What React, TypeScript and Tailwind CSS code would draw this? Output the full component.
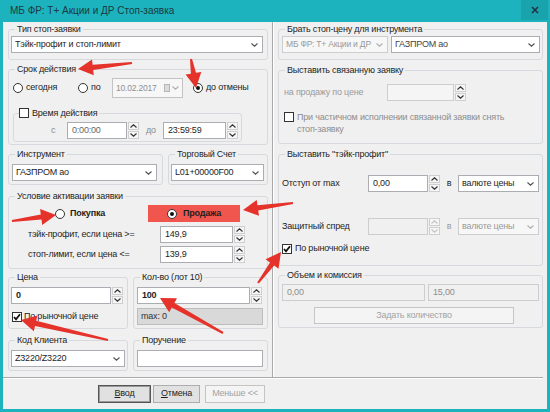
import React from "react";

type P = { className?: string; children?: React.ReactNode };

function Group({ label, className = "", children }: P & { label: React.ReactNode }) {
  return (
    <fieldset className={`border border-[#d6dade] rounded-[3px] px-[2px] min-w-0 ${className}`}>
      <legend className="ml-[4px] px-[2px] h-[12px] leading-[12px] text-[#1e1e1e]">{label}</legend>
      {children}
    </fieldset>
  );
}

function Chev({ up = false, color = "#444" }: { up?: boolean; color?: string }) {
  return (
    <svg width="7" height="4" viewBox="0 0 7 4" className="shrink-0">
      <polyline
        points={up ? "0.5,3.5 3.5,0.8 6.5,3.5" : "0.5,0.5 3.5,3.2 6.5,0.5"}
        fill="none"
        stroke={color}
        strokeWidth="1.2"
      />
    </svg>
  );
}

function Spin({ disabled = false }: { disabled?: boolean }) {
  const c = disabled ? "#c4c4c4" : "#333";
  return (
    <div className="flex flex-col w-[11px] h-[17px] ml-[1px] shrink-0">
      <div className="h-[8px] border border-[#cfcfcf] bg-[#f6f6f6] flex items-center justify-center">
        <Chev up color={c} />
      </div>
      <div className="h-[8px] mt-[1px] border border-[#cfcfcf] bg-[#f6f6f6] flex items-center justify-center">
        <Chev color={c} />
      </div>
    </div>
  );
}

function Select({ value, className = "", disabled = false }: { value: string; className?: string; disabled?: boolean }) {
  return (
    <div
      className={`h-[17px] border ${disabled ? "border-[#cdcdcd] bg-[#f7f7f7] text-[#9a9a9a]" : "border-[#abadb3] bg-white text-[#1e1e1e]"} flex items-center pl-[3px] pr-[4px] shrink-0 ${className}`}
    >
      <span className="flex-1 whitespace-nowrap overflow-hidden">{value}</span>
      <Chev color={disabled ? "#b0b0b0" : "#555"} />
    </div>
  );
}

function Input({ value = "", className = "", disabled = false, bold = false, muted = false }: { value?: string; className?: string; disabled?: boolean; bold?: boolean; muted?: boolean }) {
  return (
    <div
      className={`h-[17px] border flex items-center pl-[4px] shrink-0 ${disabled ? "border-[#cdcdcd] bg-[#f0f0f0] text-[#8d8d8d]" : "border-[#abadb3] bg-white"} ${muted ? "text-[#666]" : disabled ? "" : "text-[#1e1e1e]"} ${bold ? "font-bold" : ""} ${className}`}
    >
      {value}
    </div>
  );
}

function Radio({ checked = false }: { checked?: boolean }) {
  return (
    <div className="w-[10px] h-[10px] rounded-full border border-[#333] bg-white flex items-center justify-center shrink-0">
      {checked && <div className="w-[4px] h-[4px] rounded-full bg-[#111]" />}
    </div>
  );
}

function Check({ checked = false }: { checked?: boolean }) {
  return (
    <div className="w-[10px] h-[10px] border border-[#333] bg-white flex items-center justify-center shrink-0">
      {checked && (
        <svg width="8" height="8" viewBox="0 0 8 8">
          <polyline points="1,4 3,6.3 7,1.2" fill="none" stroke="#111" strokeWidth="1.8" />
        </svg>
      )}
    </div>
  );
}

function Arrow({ x1, y1, x2, y2 }: { x1: number; y1: number; x2: number; y2: number }) {
  const dx = x2 - x1;
  const dy = y2 - y1;
  const len = Math.sqrt(dx * dx + dy * dy);
  const ux = dx / len;
  const uy = dy / len;
  const nx = -uy;
  const ny = ux;
  const hl = 15;
  const hw = 8;
  const bx = x2 - ux * hl;
  const by = y2 - uy * hl;
  const tw = 1;
  const sw = 2.6;
  const pts = [
    [x1 + nx * tw, y1 + ny * tw],
    [bx + nx * sw, by + ny * sw],
    [bx + nx * hw, by + ny * hw],
    [x2, y2],
    [bx - nx * hw, by - ny * hw],
    [bx - nx * sw, by - ny * sw],
    [x1 - nx * tw, y1 - ny * tw],
  ]
    .map((p) => `${p[0].toFixed(1)},${p[1].toFixed(1)}`)
    .join(" ");
  return <polygon points={pts} fill="#e5322a" />;
}

function Btn({ children, className = "" }: P) {
  return (
    <div className={`h-[18px] flex items-center justify-center border ${className}`}>{children}</div>
  );
}

export default function App() {
  return (
    <div className="relative w-[550px] h-[412px] bg-[#1cb3be] flex flex-col font-['Liberation_Sans',Arial,sans-serif] text-[9px] tracking-[-0.2px] text-[#1e1e1e] overflow-hidden">
      {/* title bar */}
      <div className="h-[22px] flex shrink-0">
        <div className="flex-1 pl-[10px] pt-[5px] text-[10px] tracking-normal text-[#1d3a3e] leading-[12px]">МБ ФР: Т+ Акции и ДР Стоп-заявка</div>
        <div className="w-[27px] h-[20px] mr-[2px] bg-[#19a3ad] flex items-center justify-center">
          <svg width="8" height="8" viewBox="0 0 8 8">
            <path d="M1 1 L7 7 M7 1 L1 7" stroke="#234" strokeWidth="1.6" />
          </svg>
        </div>
      </div>

      {/* body */}
      <div className="mx-[3px] mb-[3px] flex-1 bg-[#f0f0f0] flex flex-col">
        <div className="h-[355px] flex pl-[5px] shrink-0">
          {/* left column */}
          <div className="w-[260px] flex flex-col pt-[1px]">
            <Group label="Тип стоп-заявки" className="pt-[1px] pb-[6px]">
              <Select value="Тэйк-профит и стоп-лимит" className="w-[252px]" />
            </Group>

            <Group label="Срок действия" className="mt-[3px] pb-[2px]">
              <div className="mt-[3px] h-[20px] flex items-center">
                <div className="ml-[2px] flex items-center gap-[3px] w-[65px]">
                  <Radio />
                  <span>сегодня</span>
                </div>
                <div className="flex items-center gap-[3px] w-[34px]">
                  <Radio />
                  <span>по</span>
                </div>
                <div className="w-[71px] h-[20px] border border-[#c3c3c3] bg-[#f7f7f7] flex items-center pl-[3px] pr-[3px] text-[#909090]">
                  <span className="flex-1 whitespace-nowrap text-[8.5px]">10.02.2017</span>
                  <div className="w-[6px] h-[8px] border border-[#b5b5b5] bg-[#dcdcdc] mr-[2px] shrink-0" />
                  <Chev color="#b0b0b0" />
                </div>
                <div className="ml-[10px] flex items-center gap-[3px]">
                  <Radio checked />
                  <span>до отмены</span>
                </div>
              </div>

              <Group
                label={
                  <span className="flex items-center gap-[3px] -ml-[3px]">
                    <Check />
                    <span>Время действия</span>
                  </span>
                }
                className="ml-[2px] w-[229px] mt-[9px] pb-[2px]"
              >
                <div className="mt-[3px] flex items-center">
                  <div className="w-[35px]" />
                  <span className="w-[16px] text-[#8a8a8a]">с</span>
                  <Input value="0:00:00" muted className="w-[60px]" />
                  <Spin />
                  <span className="w-[24px] text-center text-[#8a8a8a]">до</span>
                  <Input value="23:59:59" className="w-[63px]" />
                  <Spin />
                </div>
              </Group>
            </Group>

            <div className="mt-[3px] flex gap-[5px]">
              <Group label="Инструмент" className="w-[155px] pt-[4px] pb-[3px]">
                <Select value="ГАЗПРОМ ао" className="w-[145px] ml-[1px]" />
              </Group>
              <Group label="Торговый Счет" className="w-[100px] pt-[4px] pb-[3px]">
                <Select value="L01+00000F00" className="w-[93px]" />
              </Group>
            </div>

            <Group label="Условие активации заявки" className="mt-[5px] pb-[5px]">
              <div className="mt-[3px] h-[17px] flex items-center">
                <div className="w-[137px] pl-[44px] flex items-center gap-[5px] font-bold">
                  <Radio />
                  <span>Покупка</span>
                </div>
                <div className="w-[92px] h-[17px] bg-[#f0564d] flex items-center justify-center gap-[6px] font-bold">
                  <Radio checked />
                  <span>Продажа</span>
                </div>
              </div>
              <div className="mt-[4px] flex items-center">
                <span className="w-[149px] pl-[17px]">тэйк-профит, если цена &gt;=</span>
                <Input value="149,9" className="w-[73px]" />
                <Spin />
              </div>
              <div className="mt-[3px] flex items-center">
                <span className="w-[149px] pl-[17px]">стоп-лимит, если цена &lt;=</span>
                <Input value="139,9" className="w-[73px]" />
                <Spin />
              </div>
            </Group>

            <div className="mt-[2px] flex gap-[5px]">
              <Group label="Цена" className="w-[120px] pb-[6px]">
                <div className="mt-[4px] flex items-center">
                  <Input value="0" bold className="w-[100px]" />
                  <Spin />
                </div>
                <div className="mt-[8px] h-[10px] ml-[1px] flex items-center gap-[2px]">
                  <Check checked />
                  <span>По рыночной цене</span>
                </div>
              </Group>
              <Group label="Кол-во (лот 10)" className="w-[135px] pb-[3px]">
                <div className="mt-[4px] ml-[1px] flex items-center">
                  <Input value="100" bold className="w-[113px]" />
                  <Spin />
                </div>
                <div className="mt-[4px] ml-[1px] w-[126px] h-[17px] bg-[#d9d9d9] border border-[#bdbdbd] flex items-center pl-[3px] text-[#333]">
                  max: 0
                </div>
              </Group>
            </div>

            <div className="mt-[5px] flex gap-[5px]">
              <Group label="Код Клиента" className="w-[120px] pb-[3px]">
                <Select value="Z3220/Z3220" className="mt-[4px] w-[114px]" />
              </Group>
              <Group label="Поручение" className="w-[135px] pb-[3px]">
                <Input className="mt-[4px] ml-[1px] w-[126px]" />
              </Group>
            </div>
          </div>

          {/* separator */}
          <div className="ml-[4px] w-[1px] bg-[#a9a9a9]" />
          <div className="w-[1px] bg-white" />

          {/* right column */}
          <div className="ml-[4px] w-[265px] flex flex-col pt-[1px]">
            <Group label="Брать стоп-цену для инструмента" className="pt-[1px] pb-[6px]">
              <div className="ml-[1px] flex gap-[3px]">
                <Select value="МБ ФР: Т+ Акции и ДР" disabled className="w-[106px] pr-[3px] text-[8.5px]" />
                <Select value="ГАЗПРОМ ао" className="w-[149px] text-[#444]" />
              </div>
            </Group>

            <Group label="Выставить связанную заявку" className="mt-[4px] pb-[8px]">
              <div className="mt-[8px] flex items-center">
                <span className="w-[106px] pl-[3px] text-[#9a9a9a]">на продажу по цене</span>
                <Input disabled className="w-[67px] bg-[#f5f5f5]" />
                <Spin />
              </div>
              <div className="mt-[10px] pl-[3px] flex items-start gap-[3px]">
                <div className="mt-[1px]">
                  <Check />
                </div>
                <span className="leading-[12px] text-[#8d8d8d]">
                  При частичном исполнении связанной заявки снять
                  <br />
                  стоп-заявку
                </span>
              </div>
            </Group>

            <Group label={'Выставить "тэйк-профит"'} className="mt-[4px] pb-[11px]">
              <div className="mt-[15px] flex items-center">
                <span className="w-[87px] pl-[1px]">Отступ от max</span>
                <Input value="0,00" className="w-[60px]" />
                <Spin />
                <span className="w-[18px] text-center">в</span>
                <Select value="валюте цены" className="w-[81px]" />
              </div>
              <div className="mt-[26px] flex items-center">
                <span className="w-[87px] pl-[1px]">Защитный спред</span>
                <Input disabled className="w-[60px]" />
                <Spin disabled />
                <span className="w-[18px] text-center text-[#9a9a9a]">в</span>
                <Select value="валюте цены" disabled className="w-[81px]" />
              </div>
              <div className="mt-[9px] h-[10px] ml-[1px] flex items-center gap-[3px]">
                <Check checked />
                <span>По рыночной цене</span>
              </div>
            </Group>

            <Group label="Объем и комиссия" className="mt-[3px] pb-[3px]">
              <div className="mt-[3px] ml-[1px] flex gap-[3px]">
                <Input value="0,00" disabled className="w-[143px]" />
                <Input value="15,00" disabled className="w-[111px]" />
              </div>
              <div className="mt-[6px] ml-[33px] w-[200px] h-[17px] border border-[#c6c6c6] bg-[#f4f4f4] flex items-center justify-center text-[#a3a3a3]">
                Задать количество
              </div>
            </Group>
          </div>
        </div>

        {/* bottom line */}
        <div className="w-[540px] h-[1px] bg-[#a9a9a9]" />
        <div className="w-[540px] h-[1px] bg-white" />

        {/* buttons */}
        <div className="mt-[6px] pl-[95px] flex gap-[2px]">
          <Btn className="w-[53px] border-[#555] bg-[#e1e1e1] shadow-[inset_0_0_0_1px_#9a9a9a]">
            <span><span className="underline">В</span>вод</span>
          </Btn>
          <Btn className="w-[47px] border-[#adadad] bg-[#e1e1e1]">
            <span><span className="underline">О</span>тмена</span>
          </Btn>
          <Btn className="ml-[3px] w-[60px] border-[#c4c4c4] bg-[#f4f4f4] text-[#a3a3a3]">Меньше &lt;&lt;</Btn>
        </div>
      </div>

      {/* annotation arrows */}
      <svg className="absolute left-0 top-0 pointer-events-none" width="550" height="412">
        <Arrow x1={132} y1={63} x2={78} y2={69} />
        <Arrow x1={191} y1={59} x2={196} y2={88} />
        <Arrow x1={12} y1={221} x2={56} y2={215} />
        <Arrow x1={293} y1={203} x2={243} y2={210} />
        <Arrow x1={258} y1={283} x2={281} y2={252} />
        <Arrow x1={108} y1={340} x2={21} y2={320} />
        <Arrow x1={223} y1={333} x2={160} y2={298} />
      </svg>
    </div>
  );
}
